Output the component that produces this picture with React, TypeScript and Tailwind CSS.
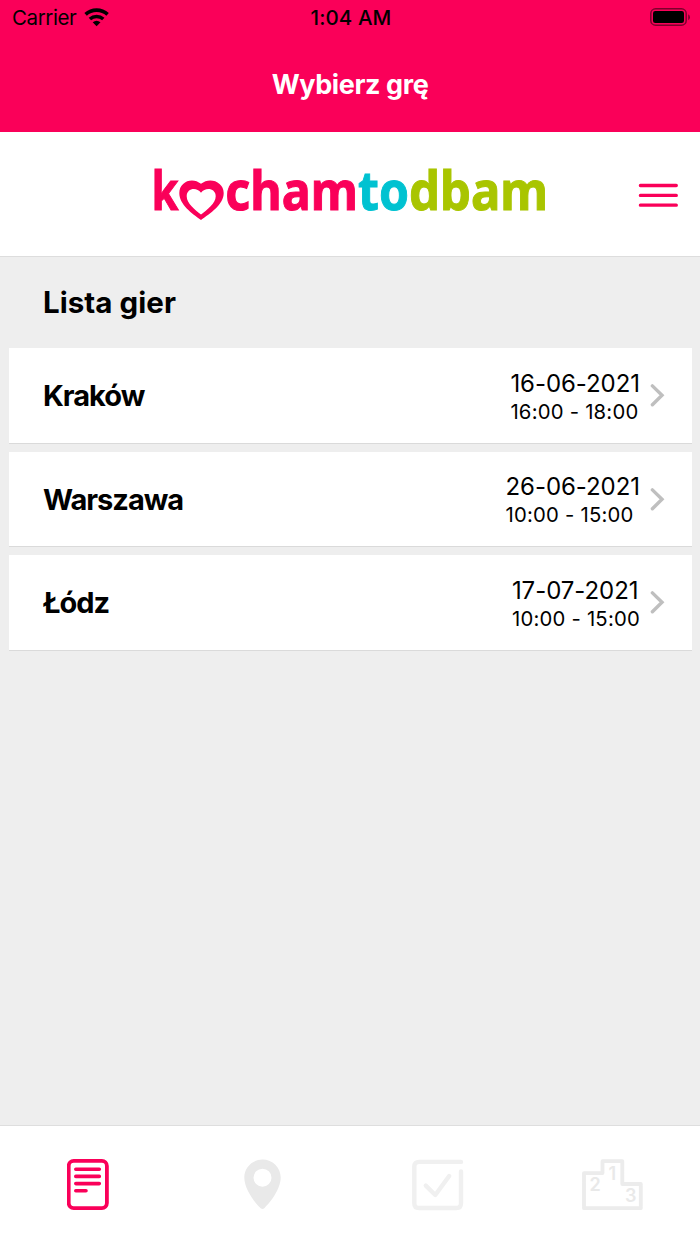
import React from 'react';

const games = [
  { city: 'Kraków', date: '16-06-2021', time: '16:00 - 18:00' },
  { city: 'Warszawa', date: '26-06-2021', time: '10:00 - 15:00' },
  { city: 'Łódz', date: '17-07-2021', time: '10:00 - 15:00' },
];

const StatusBar = () => (
  <div className="grid grid-cols-3 items-center h-9 pl-3 pr-2.5 text-[20.5px] leading-none text-black">
    <div className="flex items-center gap-2">
      <span className="tracking-[-0.4px]">Carrier</span>
      <svg className="w-[26px] h-[19px] -mt-0.5" viewBox="0 0 26 19" fill="none" stroke="black">
        <path d="M1.6 6.3C7.8.7 17.4.7 23.6 6.3" strokeWidth="3.7" />
        <path d="M5.9 11C9.7 7.6 15.5 7.6 19.3 11" strokeWidth="3.6" />
        <path d="M8.7 14.3Q12.6 11.3 16.5 14.3L12.6 18.2Z" fill="black" stroke="none" />
      </svg>
    </div>
    <span className="text-center font-medium tracking-[0.1px]">1:04 AM</span>
    <svg className="w-10 h-[18px] -mt-0.5 justify-self-end" viewBox="0 0 40 18">
      <rect x="0.8" y="0.8" width="35.4" height="16.4" rx="4.8" fill="none" stroke="black" strokeOpacity="0.5" strokeWidth="1.5" />
      <rect x="3" y="3" width="31" height="12" rx="2.3" fill="black" />
      <path d="M38.2 6.2Q40 7 40 9.2T38.2 12.2Z" fill="black" fillOpacity="0.5" />
    </svg>
  </div>
);

const Logo = () => (
  <svg
    className="w-[420px] h-[80px]"
    viewBox="140 150 420 80"
    fontFamily="'Noto Sans', sans-serif"
    fontWeight="700"
    fontSize="53"
    strokeWidth="1"
  >
    <text x="151.5" y="210" fill="#fa0059" stroke="#fa0059" textLength="27" lengthAdjust="spacingAndGlyphs">k</text>
    <path
      fill="#fa0059"
      fillRule="evenodd"
      d="M201 220C192 213.5 179.3 204.5 179.3 193C179.3 181.5 192.5 176.5 201 183.8C209.5 176.5 223.7 181.5 223.7 193C223.7 204.5 210 213.5 201 220ZM201 214.6C207 209.8 215.7 203.3 215.7 196.2C215.7 188.6 205.8 186.4 201 192.8C196.2 186.4 186.7 188.6 186.7 196.2C186.7 203.3 195 209.8 201 214.6Z"
    />
    <text x="225.3" y="210" fill="#fa0059" stroke="#fa0059" textLength="132.5" lengthAdjust="spacingAndGlyphs">cham</text>
    <text x="358" y="210" fill="#00c2d1" stroke="#00c2d1" textLength="51" lengthAdjust="spacingAndGlyphs">to</text>
    <text x="409" y="210" fill="#a9c500" stroke="#a9c500" textLength="139" lengthAdjust="spacingAndGlyphs">dbam</text>
  </svg>
);

const Chevron = () => (
  <svg className="w-[15px] h-6" viewBox="0 0 15 24" fill="none" stroke="#bfbfbf" strokeWidth="3.4" strokeLinecap="round" strokeLinejoin="miter">
    <path d="M2.4 2.9L12 12.3L2.4 21.7" />
  </svg>
);

const TabBar = () => (
  <nav className="grid grid-cols-4 h-[119px] pt-[33px] bg-white border-t border-[#dedede] justify-items-center items-start">
    <svg className="w-[42px] h-[52px]" viewBox="0 0 42 52" fill="none" stroke="#fa0059" strokeLinecap="round">
      <rect x="1.7" y="1.9" width="38.2" height="47.2" rx="5" strokeWidth="3.8" />
      <path d="M8.8 10.3H32.3M8.8 17.4H32.3M8.8 24.6H32.3M8.8 31.8H19" strokeWidth="3.6" />
    </svg>
    <svg className="w-[37px] h-[51px]" viewBox="0 0 37 51">
      <path
        fill="#e9e9e9"
        fillRule="evenodd"
        d="M18.5 .5C28.6 .5 36.7 8.4 36.7 18.6C36.7 30 26.5 43.5 20.3 49.2Q18.5 50.8 16.7 49.2C10.5 43.5 .3 30 .3 18.6C.3 8.4 8.4 .5 18.5 .5ZM18.5 9.7A9 9 0 1 0 18.5 27.7A9 9 0 1 0 18.5 9.7Z"
      />
    </svg>
    <svg className="w-[52px] h-[52px]" viewBox="0 0 52 52" fill="none" stroke="#f0f0f0" strokeWidth="4.4" strokeLinecap="round" strokeLinejoin="round">
      <path d="M49 2.9H7.1Q2.3 2.9 2.3 7.7V44.2Q2.3 49 7.1 49H44.2Q49 49 49 44.2V12.5" />
      <path d="M13.8 26.6L23.3 36L37.2 17" />
    </svg>
    <svg
      className="w-[62px] h-[52px]"
      viewBox="0 0 62 52"
      fill="none"
      stroke="#ececec"
      strokeWidth="3.8"
      strokeLinejoin="round"
    >
      <path d="M2 49.2V14.1H20.5V2.2H40.3V25H58.8V49.2Z" />
      <g fill="#e9e9e9" stroke="none" fontFamily="Inter, sans-serif" fontWeight="600" fontSize="18">
        <text x="7.6" y="32">2</text>
        <text x="26.5" y="20.6">1</text>
        <text x="43" y="43.2">3</text>
      </g>
    </svg>
  </nav>
);

const App = () => {
  return (
    <div className="flex flex-col w-[700px] h-[1244px] bg-[#eeeeee] font-['Inter',sans-serif] text-black overflow-hidden">
      <header className="h-[132px] bg-[#fa0059]">
        <StatusBar />
        <h1 className="pt-[33px] text-center text-[27px] leading-8 font-bold text-white tracking-[-0.4px]">Wybierz grę</h1>
      </header>

      {/* Brand row with the menu button */}
      <div className="grid grid-cols-[1fr_420px_1fr] h-[125px] pt-[18px] bg-white border-b border-[#dddddd] items-start">
        <span />
        <Logo />
        <button className="justify-self-end mt-[33px] mr-[22px]" aria-label="Menu">
          <svg className="w-10 h-6" viewBox="0 0 40 24" stroke="#fa0059" strokeWidth="3.3" strokeLinecap="round">
            <path d="M2.4 2.5H38.3M2.4 12.4H38.3M2.4 22.2H38.3" />
          </svg>
        </button>
      </div>

      <main className="flex-1">
        <h2 className="h-[91px] pl-[43px] pt-[27px] text-[29.5px] leading-9 font-bold tracking-[0.05px]">Lista gier</h2>
        <ul className="flex flex-col gap-2 px-[8.5px]">
          {games.map((game) => (
            <li
              key={game.city}
              className="flex items-center justify-between h-[95.6px] pl-[34.5px] pr-[26.5px] bg-white border-b border-[#dadada]"
            >
              <span className="pt-0.5 text-[29px] leading-9 font-bold tracking-[-1px]">{game.city}</span>
              <div className="flex items-center gap-2.5">
                <div className="pt-[5px]">
                  <p className="text-[24px] leading-7 tracking-[-0.05px]">{game.date}</p>
                  <p className="text-[20.3px] leading-7 tracking-[0.22px]">{game.time}</p>
                </div>
                <Chevron />
              </div>
            </li>
          ))}
        </ul>
      </main>

      <TabBar />
    </div>
  );
};

export default App;
